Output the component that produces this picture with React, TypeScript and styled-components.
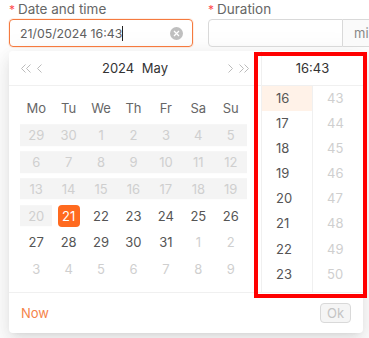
import React from 'react';
import styled, { createGlobalStyle, css } from 'styled-components';

const GlobalStyle = createGlobalStyle`
    html, body {
        margin: 0;
        padding: 0;
        background: #fff;
        overflow: hidden;
    }
    body {
        font-family: Inter, "Open Sans", "DejaVu Sans", sans-serif;
        color: #595959;
    }
`;

const primary = '#ff6a1f';

const Page = styled.div`
    position: relative;
    width: 369px;
    height: 338px;
    overflow: hidden;
`;

const FieldsRow = styled.div`
    display: flex;
    gap: 15px;
    padding: 1px 0 0 9px;
`;

const Field = styled.div<{ $width: number }>`
    width: ${(p) => p.$width}px;
    flex-shrink: 0;
`;

const Label = styled.label`
    display: block;
    height: 18px;
    line-height: 16px;
    font-size: 13.5px;
    color: #666;
    white-space: nowrap;

    &::before {
        content: '*';
        color: #ff4d4f;
        margin-right: 3px;
        font-size: 12px;
    }
`;

const InputBox = styled.div<{ $focused?: boolean }>`
    display: flex;
    align-items: center;
    height: 28px;
    box-sizing: border-box;
    border: 1px solid ${(p) => (p.$focused ? '#f57a3f' : '#d9d9d9')};
    border-radius: 4px;
    padding: 0 10px;
    font-size: 12.3px;
    color: #606060;
    ${(p) =>
        p.$focused &&
        css`
            box-shadow: 0 0 0 1px rgba(255, 120, 50, 0.12);
        `}
`;

const InputText = styled.span`
    flex: 1;
    white-space: nowrap;
`;

const Caret = styled.span`
    display: inline-block;
    width: 1px;
    height: 15px;
    background: #222;
    vertical-align: -3px;
`;

const ClearIcon = styled.span`
    width: 13px;
    height: 13px;
    border-radius: 50%;
    background: #bfbfbf;
    display: flex;
    align-items: center;
    justify-content: center;
    margin-right: -1px;
`;

const Group = styled.div`
    display: flex;
    width: 200px;
`;

const GroupInput = styled.div`
    width: 135px;
    height: 28px;
    box-sizing: border-box;
    border: 1px solid #d9d9d9;
    border-radius: 4px 0 0 4px;
`;

const Addon = styled.div`
    height: 28px;
    box-sizing: border-box;
    border: 1px solid #d9d9d9;
    border-left: none;
    background: #fafafa;
    padding: 0 11px;
    line-height: 26px;
    font-size: 13px;
    color: #888;
    flex: 1;
`;

const Popup = styled.div`
    margin: 4px 0 0 9px;
    width: 354px;
    height: 282px;
    background: #fff;
    border-radius: 4px;
    box-shadow: 0 3px 6px -4px rgba(0, 0, 0, 0.12), 0 6px 16px 0 rgba(0, 0, 0, 0.08),
        0 9px 28px 8px rgba(0, 0, 0, 0.05);
    display: flex;
    flex-direction: column;
    font-size: 13px;
`;

const Panels = styled.div`
    display: flex;
    height: 241px;
    border-bottom: 1px solid #f0f0f0;
`;

const DatePanel = styled.div`
    width: 252px;
    display: flex;
    flex-direction: column;
`;

const PanelHeader = styled.div`
    height: 35px;
    box-sizing: border-box;
    border-bottom: 1px solid #f0f0f0;
    display: flex;
    align-items: center;
    padding: 0 12px;
    color: #333;
`;

const NavGroup = styled.div<{ $end?: boolean }>`
    display: flex;
    gap: 6px;
    align-items: center;
    width: 32px;
    justify-content: ${(p) => (p.$end ? 'flex-end' : 'flex-start')};
`;

const HeaderTitle = styled.div`
    flex: 1;
    text-align: center;
    word-spacing: 4px;
`;

const Calendar = styled.div`
    display: grid;
    grid-template-columns: repeat(7, 32.43px);
    grid-auto-rows: 26.8px;
    padding: 9px 0 0 11px;
`;

const WeekDay = styled.div`
    display: flex;
    align-items: center;
    justify-content: center;
    color: #666;
`;

const DayCell = styled.div<{ $muted: boolean; $band: boolean }>`
    position: relative;
    display: flex;
    align-items: center;
    justify-content: center;
    color: ${(p) => (p.$muted ? '#cfcfcf' : '#555')};

    &::before {
        content: '';
        position: absolute;
        left: 0;
        right: 0;
        top: 50%;
        height: 21.6px;
        transform: translateY(-50%);
        background: ${(p) => (p.$band ? '#f4f4f4' : 'transparent')};
    }
`;

const DayInner = styled.span<{ $selected: boolean }>`
    position: relative;
    width: 22px;
    height: 22px;
    line-height: 22px;
    text-align: center;
    border-radius: 4px;
    ${(p) =>
        p.$selected &&
        css`
            background: ${primary};
            color: #fff;
        `}
`;

const TimePanel = styled.div`
    flex: 1;
    border-left: 1px solid #f0f0f0;
    display: flex;
    flex-direction: column;
`;

const TimeHeader = styled(PanelHeader)`
    justify-content: center;
`;

const TimeColumns = styled.div`
    display: flex;
    flex: 1;
    overflow: hidden;
`;

const TimeColumn = styled.ul`
    list-style: none;
    margin: 0;
    padding: 0;
    flex: 1;
    & + & {
        border-left: 1px solid #f0f0f0;
    }
`;

const TimeCell = styled.li<{ $selected?: boolean; $disabled?: boolean }>`
    height: 25.1px;
    line-height: 25.1px;
    padding-left: 14px;
    color: ${(p) => (p.$disabled ? '#cfcfcf' : '#555')};
    background: ${(p) => (p.$selected ? '#fff2e8' : 'transparent')};
`;

const Footer = styled.div`
    flex: 1;
    display: flex;
    align-items: center;
    justify-content: space-between;
    padding: 0 12px;
`;

const NowLink = styled.span`
    color: #f5834a;
`;

const OkButton = styled.button`
    width: 31px;
    height: 20px;
    padding: 0;
    font: inherit;
    font-size: 13px;
    color: #c4c4c4;
    background: #f5f5f5;
    border: 1px solid #d9d9d9;
    border-radius: 4px;
`;

const Highlight = styled.div`
    position: absolute;
    left: 254px;
    top: 52px;
    width: 113px;
    height: 246px;
    box-sizing: border-box;
    border: 4px solid #ff0000;
`;

const Chevron = ({ dir, double }: { dir: 'left' | 'right'; double?: boolean }) => {
    const pts = dir === 'left' ? '4,0 0,4 4,8' : '0,0 4,4 0,8';
    return (
        <svg width={double ? 10 : 5} height="9" viewBox={`-0.5 -0.5 ${double ? 10 : 5} 9`}>
            <polyline points={pts} fill="none" stroke="#bbb" strokeWidth="1" />
            {double && (
                <polyline
                    points={pts}
                    transform="translate(5 0)"
                    fill="none"
                    stroke="#bbb"
                    strokeWidth="1"
                />
            )}
        </svg>
    );
};

const weekDays = ['Mo', 'Tu', 'We', 'Th', 'Fr', 'Sa', 'Su'];

// May 2024 grid, starting Monday 29 Apr
const buildDays = () => {
    const days: { n: number; inMonth: boolean; disabled: boolean }[] = [];
    [29, 30].forEach((n) => days.push({ n, inMonth: false, disabled: true }));
    for (let n = 1; n <= 31; n++) days.push({ n, inMonth: true, disabled: n < 21 });
    for (let n = 1; days.length < 42; n++) days.push({ n, inMonth: false, disabled: false });
    return days;
};

const hours = [16, 17, 18, 19, 20, 21, 22, 23];
const minutes = [43, 44, 45, 46, 47, 48, 49, 50];

export default function App() {
    const days = buildDays();

    return (
        <Page>
            <GlobalStyle />
            <FieldsRow>
                <Field $width={184}>
                    <Label>Date and time</Label>
                    <InputBox $focused>
                        <InputText>
                            21/05/2024 16:43
                            <Caret />
                        </InputText>
                        <ClearIcon>
                            <svg width="7" height="7" viewBox="0 0 7 7">
                                <path d="M1 1L6 6M6 1L1 6" stroke="#fff" strokeWidth="1.3" />
                            </svg>
                        </ClearIcon>
                    </InputBox>
                </Field>
                <Field $width={200}>
                    <Label>Duration</Label>
                    <Group>
                        <GroupInput />
                        <Addon>min</Addon>
                    </Group>
                </Field>
            </FieldsRow>

            <Popup>
                <Panels>
                    <DatePanel>
                        <PanelHeader>
                            <NavGroup>
                                <Chevron dir="left" double />
                                <Chevron dir="left" />
                            </NavGroup>
                            <HeaderTitle>2024 May</HeaderTitle>
                            <NavGroup $end>
                                <Chevron dir="right" />
                                <Chevron dir="right" double />
                            </NavGroup>
                        </PanelHeader>
                        <Calendar>
                            {weekDays.map((d) => (
                                <WeekDay key={d}>{d}</WeekDay>
                            ))}
                            {days.map((d, i) => (
                                <DayCell key={i} $muted={d.disabled || !d.inMonth} $band={d.disabled}>
                                    <DayInner $selected={d.inMonth && d.n === 21}>{d.n}</DayInner>
                                </DayCell>
                            ))}
                        </Calendar>
                    </DatePanel>
                    <TimePanel>
                        <TimeHeader>16:43</TimeHeader>
                        <TimeColumns>
                            <TimeColumn>
                                {hours.map((h) => (
                                    <TimeCell key={h} $selected={h === 16}>
                                        {h}
                                    </TimeCell>
                                ))}
                            </TimeColumn>
                            <TimeColumn>
                                {minutes.map((m) => (
                                    <TimeCell key={m} $disabled>
                                        {m}
                                    </TimeCell>
                                ))}
                            </TimeColumn>
                        </TimeColumns>
                    </TimePanel>
                </Panels>
                <Footer>
                    <NowLink>Now</NowLink>
                    <OkButton disabled>Ok</OkButton>
                </Footer>
            </Popup>
            <Highlight />
        </Page>
    );
}
